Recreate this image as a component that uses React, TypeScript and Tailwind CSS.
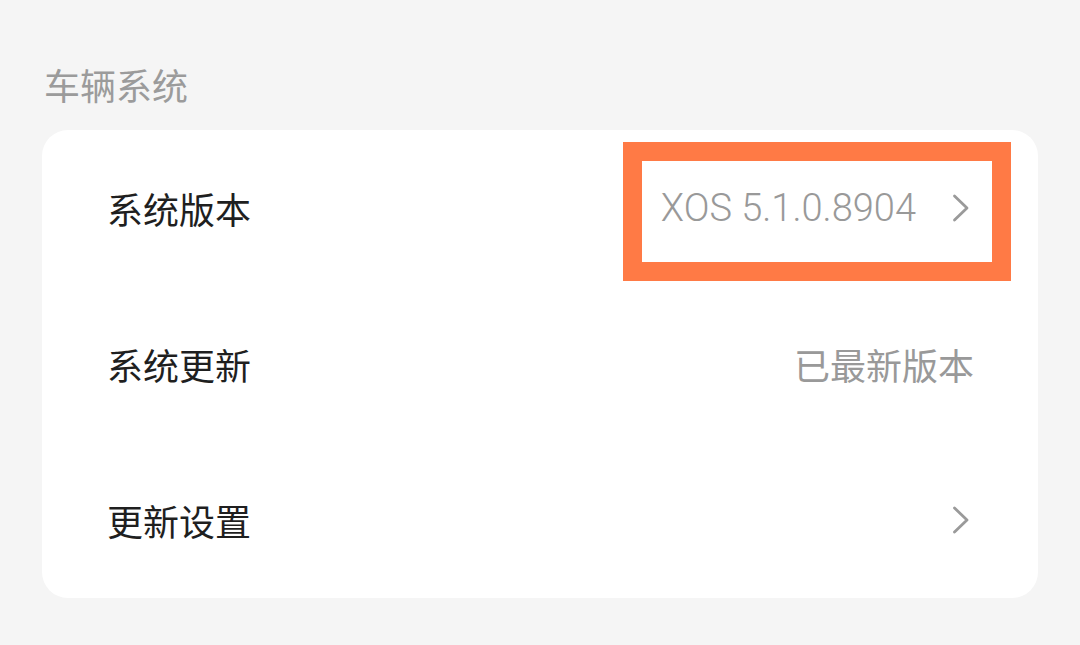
import { ReactNode } from "react";

const font = { fontFamily: '"Noto Sans CJK SC", "Noto Sans", sans-serif' };

function Chevron() {
  return (
    <svg width="18" height="28" viewBox="0 0 18 28" fill="none" className="shrink-0">
      <path d="M2.5 2 L15 14 L2.5 26" stroke="#9a9a9a" strokeWidth="2.8" strokeLinecap="round" strokeLinejoin="round" />
    </svg>
  );
}

function Row({ label, children }: { label: string; children?: ReactNode }) {
  return (
    <div className="relative flex h-[156px] items-center justify-between pl-[65px] pr-[68px]">
      <span className="text-[36px] leading-none text-[#1f1f1f]">{label}</span>
      {children}
    </div>
  );
}

export default function App() {
  return (
    <div className="h-[645px] w-[1080px] bg-[#f5f5f5] px-[42px] pt-[66px]" style={font}>
      <h2 className="pl-[2px] text-[36px] font-normal leading-none text-[#9b9b9b]">车辆系统</h2>

      <div className="mt-[28px] w-[996px] rounded-[26px] bg-white">
        <Row label="系统版本">
          <div className="flex items-center gap-[36px]">
            <span className="text-[38px] font-light leading-none text-[#999999]" style={{ fontFamily: "Roboto, sans-serif" }}>
              XOS 5.1.0.8904
            </span>
            <Chevron />
          </div>
          <div className="pointer-events-none absolute left-[581px] top-[12px] h-[139px] w-[388px] border-[19px] border-[#ff7a45]" />
        </Row>

        <Row label="系统更新">
          <span className="-mr-[4px] text-[36px] leading-none text-[#999999]">已最新版本</span>
        </Row>

        <Row label="更新设置">
          <Chevron />
        </Row>
      </div>
    </div>
  );
}
